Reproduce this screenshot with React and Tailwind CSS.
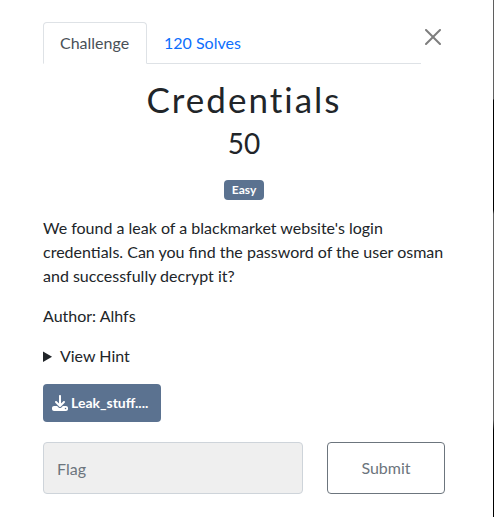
import React from "react";

function Tabs() {
  return (
    <ul className="flex w-[378px] h-[42px] border-b border-[#dee2e6]">
      <li className="h-[42px] w-[104px] shrink-0 rounded-t border border-b-white border-[#dee2e6] bg-white px-4 py-2 text-[#495057]">Challenge</li>
      <li className="h-[42px] border border-transparent px-4 py-2 text-[#0d6efd]">120 Solves</li>
    </ul>
  );
}

function CloseButton() {
  return (
    <button className="-mr-2 mt-[3px] p-1 text-black opacity-50" aria-label="Close">
      <svg viewBox="0 0 16 16" className="block h-4 w-4" fill="currentColor">
        <path d="M.293.293a1 1 0 0 1 1.414 0L8 6.586 14.293.293a1 1 0 1 1 1.414 1.414L9.414 8l6.293 6.293a1 1 0 0 1-1.414 1.414L8 9.414l-6.293 6.293a1 1 0 0 1-1.414-1.414L6.586 8 .293 1.707a1 1 0 0 1 0-1.414z" />
      </svg>
    </button>
  );
}

export default function App() {
  return (
    <div className="flex h-[517px] w-[494px] overflow-hidden bg-white font-['Lato',sans-serif] text-base leading-6 text-[#212529]">
      <main className="w-[493px] pl-[43px] pr-[48px] pt-[22px]">
        <header className="flex items-start">
          <Tabs />
          <CloseButton />
        </header>
        <h2 className="mt-4 text-center text-[35px] leading-[38px] tracking-[2px]">Credentials</h2>
        <h3 className="mt-2 text-center text-[28px] leading-[34px]">50</h3>
        <div className="mt-[20px] flex justify-center">
          <span className="flex h-5 w-10 items-center justify-center rounded bg-[#5b7290] text-xs font-bold leading-3 text-white">Easy</span>
        </div>
        <p className="mt-4 w-[402px]">We found a leak of a blackmarket website's login credentials. Can you find the password of the user osman and successfully decrypt it?</p>
        <p className="mt-4">Author: Alhfs</p>
        <details className="mt-4">
          <summary>View Hint</summary>
        </details>
        <a className="mt-4 flex h-[38px] w-[118px] items-center rounded bg-[#5b7290] pl-[9px] text-white">
          <svg viewBox="0 0 512 512" className="mr-[3px] h-4 w-4" fill="currentColor">
            <path d="M288 32c0-17.700-14.300-32-32-32s-32 14.300-32 32v242.700l-73.400-73.400c-12.500-12.500-32.800-12.500-45.300 0s-12.500 32.800 0 45.300l128 128c12.500 12.500 32.800 12.500 45.300 0l128-128c12.500-12.500 12.500-32.800 0-45.300s-32.800-12.500-45.300 0L288 274.700V32zM64 352c-35.300 0-64 28.700-64 64v32c0 35.300 28.700 64 64 64h384c35.300 0 64-28.700 64-64v-32c0-35.300-28.700-64-64-64H346.500l-45.300 45.300c-25 25-65.500 25-90.500 0L165.500 352H64zm368 56a24 24 0 1 1 0 48 24 24 0 1 1 0-48z" />
          </svg>
          <small className="text-sm font-bold">Leak_stuff....</small>
        </a>
        <form className="mt-5 flex gap-6">
          <input placeholder="Flag" className="h-[52px] w-[260px] rounded border border-[#ced4da] bg-[#efefef] px-[13px] placeholder:text-[#6c757d]" />
          <button type="button" className="h-[52px] w-[118px] rounded border border-[#6c757d] text-[#6c757d]">Submit</button>
        </form>
      </main>
      <div className="w-px bg-[linear-gradient(#5f5f5f_0px,#5f5f5f_99px,#000_100px,#000_210px,#5f5f5f_214px,#5f5f5f_420px,#000_430px)]" />
    </div>
  );
}
